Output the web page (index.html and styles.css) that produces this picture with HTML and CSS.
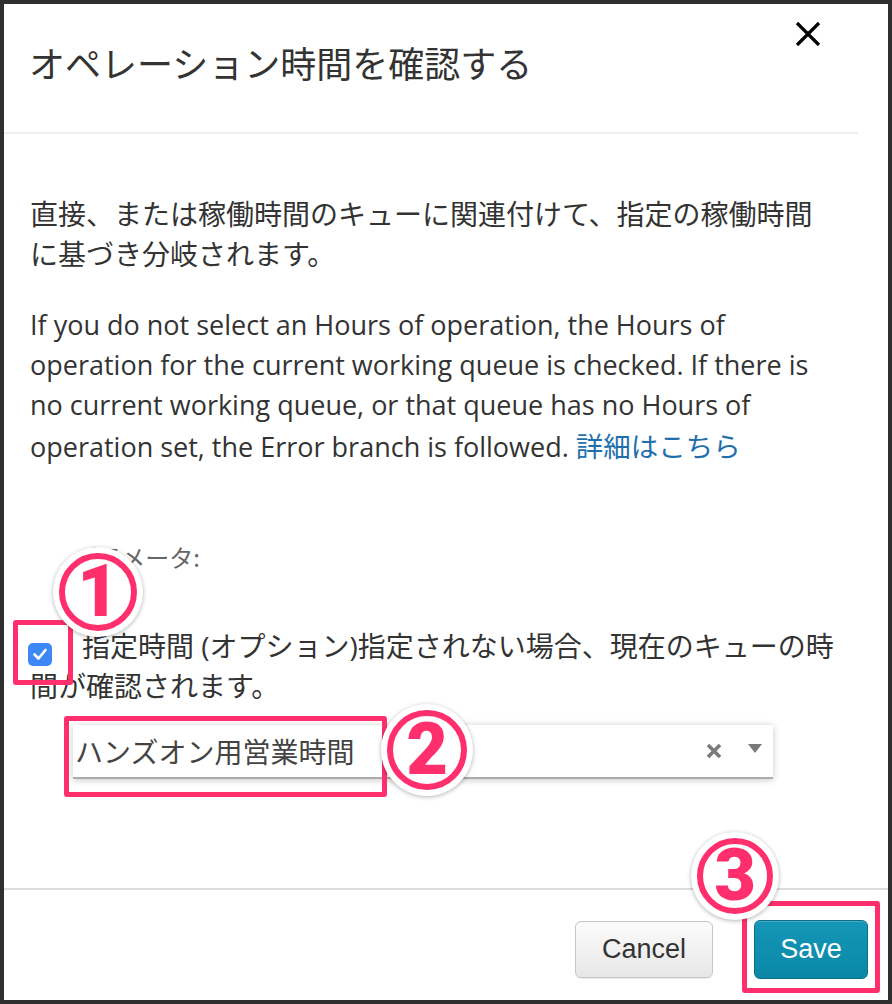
FILE: index.html
```html
<!DOCTYPE html>
<html lang="ja">
<head>
<meta charset="utf-8">
<title>オペレーション時間を確認する</title>
<link rel="stylesheet" href="styles.css">
</head>
<body>
<div class="dialog">
  <header class="dlg-header">
    <h1 class="dlg-title">オペレーション時間を確認する</h1>
    <button class="close-btn" aria-label="close">
      <svg width="26" height="26" viewBox="0 0 26 26"><path d="M2 2 L24 24 M24 2 L2 24" stroke="#000" stroke-width="3.2" fill="none"/></svg>
    </button>
  </header>
  <main class="dlg-body">
    <p class="desc-ja">直接、または稼働時間のキューに関連付けて、指定の稼働時間<br>に基づき分岐されます。</p>
    <p class="desc-en">If you do not select an Hours of operation, the Hours of<br>operation for the current working queue is checked. If there is<br>no current working queue, or that queue has no Hours of<br>operation set, the Error branch is followed. <a class="link" href="#">詳細はこちら</a></p>
    <div class="param-label">パラメータ:</div>
    <label class="check-row"><span class="checkbox"><svg width="24" height="23" viewBox="0 0 24 23"><path d="M6.5 11.5 L10.5 15.5 L17.5 7" stroke="#fff" stroke-width="2.6" fill="none" stroke-linecap="round" stroke-linejoin="round"/></svg></span>指定時間 (オプション)指定されない場合、現在のキューの時<br>間が確認されます。</label>
    <div class="select">
      <span class="select-value">ハンズオン用営業時間</span>
      <span class="select-icons">
        <svg class="clear-icon" width="16" height="16" viewBox="0 0 16 16"><path d="M2 2 L14 14 M14 2 L2 14" stroke="#7a7a7a" stroke-width="3.6" fill="none"/></svg>
        <svg class="caret-icon" width="14" height="9" viewBox="0 0 14 9"><path d="M0 0 H14 L7 9 Z" fill="#7a7a7a"/></svg>
      </span>
    </div>
  </main>
  <footer class="dlg-footer">
    <button class="btn btn-cancel">Cancel</button>
    <button class="btn btn-save">Save</button>
  </footer>

  <div class="annot-box box-1"></div>
  <div class="annot-box box-2"></div>
  <div class="annot-box box-3"></div>
  <div class="badge badge-1"><span class="badge-ring"><span class="badge-num">1</span></span></div>
  <div class="badge badge-2"><span class="badge-ring"><span class="badge-num">2</span></span></div>
  <div class="badge badge-3"><span class="badge-ring"><span class="badge-num">3</span></span></div>
</div>
</body>
</html>
```

FILE: styles.css
```css
* { box-sizing: border-box; }
html, body { margin: 0; padding: 0; background: #2f2f2f; }
body { font-family: "Open Sans", "Noto Sans CJK JP", sans-serif; color: #333; }

.dialog {
  position: relative;
  width: 892px;
  height: 1004px;
  border: 4px solid #2f2f2f;
  background: #fff;
  display: flex;
  flex-direction: column;
  overflow: hidden;
}

.dlg-header {
  height: 130px;
  flex: none;
  margin-right: 30px;
  border-bottom: 2px solid #eeeeee;
  display: flex;
  justify-content: space-between;
  align-items: flex-start;
  padding-left: 25px;
}
.dlg-title {
  margin: 36px 0 0 0;
  font-family: "Noto Sans CJK JP", sans-serif;
  font-weight: 400;
  font-size: 36px;
  line-height: 44px;
  color: #333;
}
.close-btn {
  margin: 17px 37px 0 0;
  padding: 0;
  border: 0;
  background: none;
  width: 26px;
  height: 26px;
  display: block;
}
.close-btn svg { display: block; }

.dlg-body {
  flex: 1;
  padding: 59px 30px 0 26px;
}
.desc-ja {
  margin: 0;
  font-family: "Noto Sans CJK JP", sans-serif;
  font-size: 28px;
  line-height: 40px;
  white-space: nowrap;
  color: #333;
}
.desc-en {
  margin: 32px 0 0 0;
  font-size: 27px;
  line-height: 40px;
  white-space: nowrap;
  color: #333;
}
.link {
  color: #1f6fad;
  text-decoration: none;
  font-family: "Noto Sans CJK JP", sans-serif;
  font-size: 27.5px;
}
.param-label {
  margin-top: 74px;
  padding-left: 44px;
  font-family: "Noto Sans CJK JP", sans-serif;
  font-size: 24px;
  line-height: 32px;
  color: #666;
}
.check-row {
  display: block;
  margin-top: 53px;
  font-size: 28px;
  line-height: 40px;
  white-space: nowrap;
  color: #333;
  font-family: "Open Sans", "Noto Sans CJK JP", sans-serif;
}
.checkbox {
  display: inline-block;
  width: 24px;
  height: 23px;
  margin: 0 30px 0 -2px;
  border-radius: 5px;
  background: #3d88f5;
  vertical-align: -9px;
}
.checkbox svg { display: block; }

.select {
  margin: 19px 0 0 43px;
  width: 700px;
  height: 54px;
  background: #fff;
  border-bottom: 2px solid #ababab;
  box-shadow: 0 1px 7px rgba(0, 0, 0, 0.22);
  display: flex;
  align-items: center;
  justify-content: space-between;
  padding: 0 11px 0 2px;
}
.select-value {
  font-family: "Noto Sans CJK JP", sans-serif;
  font-size: 28px;
  line-height: 40px;
  color: #444;
}
.select-icons {
  display: flex;
  align-items: center;
  gap: 26px;
}
.select-icons svg { display: block; }
.caret-icon { margin-top: -5px; }

.dlg-footer {
  flex: none;
  height: 112px;
  border-top: 2px solid #dddddd;
  display: flex;
  justify-content: flex-end;
  align-items: flex-start;
  gap: 41px;
  padding: 30px 20px 0 0;
}
.btn {
  font-family: "Liberation Sans", Arial, sans-serif;
  font-size: 27px;
  border-radius: 6px;
  padding: 0;
  cursor: pointer;
}
.btn-cancel {
  margin-top: 1px;
  width: 138px;
  height: 57px;
  color: #333;
  border: 1px solid #c6c6c6;
  background: linear-gradient(#fbfbfb, #e7e7e7);
  box-shadow: 0 1px 1px rgba(0, 0, 0, 0.08);
}
.btn-save {
  width: 114px;
  height: 59px;
  color: #fff;
  border: 1px solid #0b6f88;
  background: linear-gradient(#1597b7, #0a87a6);
  box-shadow: inset 0 1px 0 rgba(255, 255, 255, 0.2);
}

.annot-box {
  position: absolute;
  border: 5px solid #ff2f6e;
  border-radius: 3px;
}
.box-1 { left: 9px; top: 616px; width: 60px; height: 65px; }
.box-2 { left: 60px; top: 712px; width: 323px; height: 81px; }
.box-3 { left: 738px; top: 897px; width: 138px; height: 92px; }

.badge {
  position: absolute;
  border-radius: 50%;
  background: #fff;
  box-shadow: 0 1px 4px rgba(0, 0, 0, 0.3);
  padding: 6px;
}
.badge-ring {
  display: flex;
  width: 100%;
  height: 100%;
  border: 6px solid #ff2f6e;
  border-radius: 50%;
  align-items: center;
  justify-content: center;
}
.badge-num {
  font-family: Roboto, "Liberation Sans", sans-serif;
  font-weight: 900;
  font-size: 72px;
  line-height: 1;
  color: #ff2f6e;
}
.badge-1 { left: 49px; top: 543px; width: 90px; height: 90px; }
.badge-2 { left: 377px; top: 700px; width: 92px; height: 92px; }
.badge-3 { left: 687px; top: 828px; width: 88px; height: 88px; }
```
